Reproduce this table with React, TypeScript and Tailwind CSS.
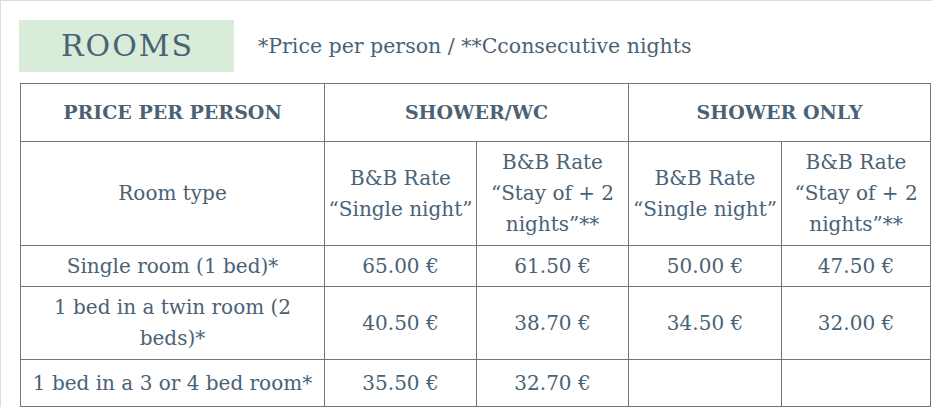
import React from 'react';

type Row = {
    label: string;
    prices: string[];
};

const rows: Row[] = [
    { label: 'Single room (1 bed)*', prices: ['65.00 €', '61.50 €', '50.00 €', '47.50 €'] },
    { label: '1 bed in a twin room (2 beds)*', prices: ['40.50 €', '38.70 €', '34.50 €', '32.00 €'] },
    { label: '1 bed in a 3 or 4 bed room*', prices: ['35.50 €', '32.70 €', '', ''] },
];

const rowHeights = ['h-[41px]', 'h-[73px]', 'h-[47px]'];

export default function App() {
    const cell = 'border border-[#747474] text-center align-middle px-[2px] leading-[31px]';

    return (
        <div className="w-[932px] h-[407px] overflow-hidden bg-white border-t border-l border-[#dcdcdc] text-[#4a6275] font-['DejaVu_Serif',serif]">
            {/* Title row */}
            <div className="flex items-center gap-6 pl-[18px] pt-[19px]">
                <div className="w-[215px] h-[52px] bg-[#d8ecd9] flex items-center justify-center">
                    <span className="text-[30px] tracking-[2px] leading-none pl-[2px]">ROOMS</span>
                </div>
                <span className="text-[20.5px] leading-none">*Price per person / **Cconsecutive nights</span>
            </div>

            {/* Price table */}
            <table className="ml-[19px] mt-[11px] w-[910px] border-collapse text-[20px] table-fixed">
                <colgroup>
                    <col className="w-[304px]" />
                    <col className="w-[152px]" />
                    <col className="w-[152px]" />
                    <col className="w-[153px]" />
                    <col className="w-[149px]" />
                </colgroup>
                <thead>
                    <tr className="h-[58px]">
                        <th className={`${cell} font-bold text-[19px]`}>PRICE PER PERSON</th>
                        <th colSpan={2} className={`${cell} font-bold text-[19px]`}>SHOWER/WC</th>
                        <th colSpan={2} className={`${cell} font-bold text-[19px]`}>SHOWER ONLY</th>
                    </tr>
                </thead>
                <tbody>
                    <tr className="h-[104px]">
                        <td className={cell}>Room type</td>
                        <td className={cell}>B&amp;B Rate “Single night”</td>
                        <td className={cell}>B&amp;B Rate “Stay of + 2 nights”**</td>
                        <td className={cell}>B&amp;B Rate “Single night”</td>
                        <td className={cell}>B&amp;B Rate “Stay of + 2 nights”**</td>
                    </tr>
                    {rows.map((row, i) => (
                        <tr key={row.label} className={rowHeights[i]}>
                            <td className={cell}>{row.label}</td>
                            {row.prices.map((p, j) => (
                                <td key={j} className={cell}>{p}</td>
                            ))}
                        </tr>
                    ))}
                </tbody>
            </table>
        </div>
    );
}
